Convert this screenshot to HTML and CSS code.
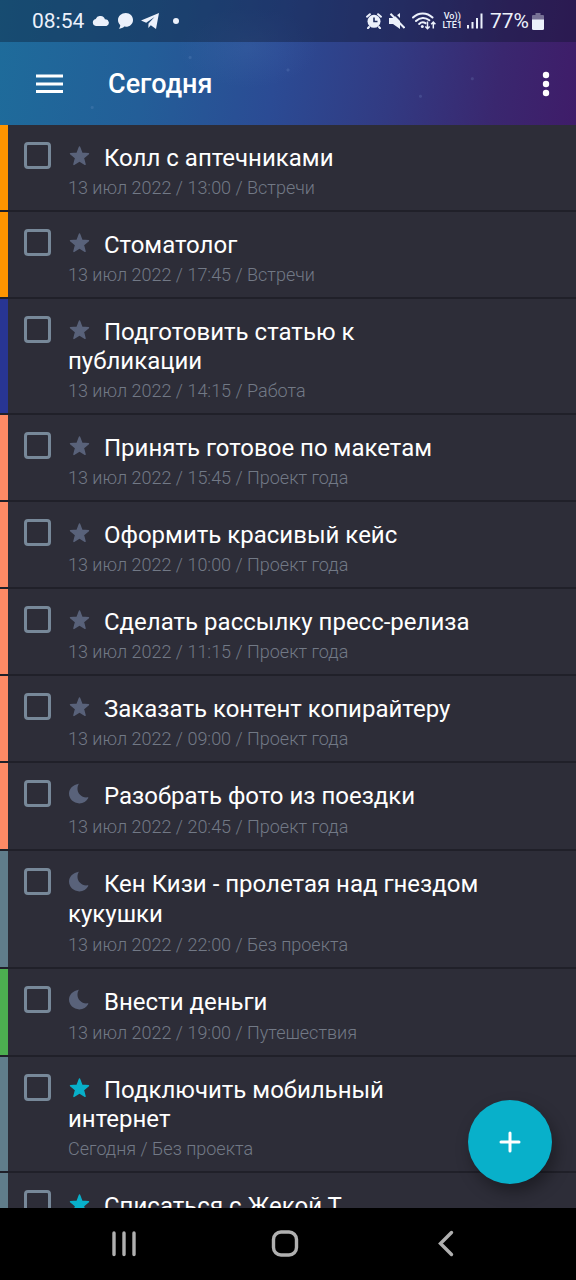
FILE: index.html
```html
<!DOCTYPE html>
<html lang="ru">
<head>
<meta charset="utf-8">
<meta name="viewport" content="width=device-width, initial-scale=1">
<title>Сегодня</title>
<link rel="stylesheet" href="styles.css">
</head>
<body>
<svg class="sprite" aria-hidden="true">
  <symbol id="star" viewBox="0 0 24 24"><path d="M11.500 3l2.400 6.200 6.600.4-5.100 4.300 1.700 6.500-5.600-3.600-5.600 3.600 1.700-6.500L2.500 9.600l6.600-.4z" fill="currentColor" stroke="currentColor" stroke-width="1.400" stroke-linejoin="round"/></symbol>
  <symbol id="moon" viewBox="0 0 24 24"><path d="M10.600 2.300C8.800 5.500 9.200 9.800 11.800 12.600c2.200 2.300 5 3.200 8 2.700.5-.1.700.3.500.7-1.800 3.400-5 5.400-9 5.400C5.600 21.400 1 17 1 11.600c0-4.900 3.900-8.800 9-9.700.6-.1.900 0 .6.400z" fill="currentColor"/></symbol>
</svg>
<header class="top">
  <div class="status">
    <div class="status-left">
      <span class="clock">08:54</span>
      <svg width="18" height="10" viewBox="0 0 18 10"><path d="M4 10a3.600 3.600 0 0 1-.3-7.100A5 5 0 0 1 13 3.400 3.400 3.400 0 0 1 14.500 10z" fill="currentColor"/></svg>
      <svg width="15" height="16" viewBox="0 0 15 16"><path d="M7.800 0C12 0 15 3 15 6.900s-3 6.800-7.200 6.800c-.6 0-1 0-1.500-.1C5 15 3 15.700.8 15.700c1-1 1.500-2.200 1.400-3.700C.8 10.700 0 8.900 0 6.900 0 3 3.500 0 7.800 0z" fill="currentColor"/></svg>
      <svg width="18" height="16" viewBox="0 0 18 16"><path d="M18 0L0 7.600l5.200 2.200L13.500 4 7.500 10.500l-.2 4.500 2.500-2.700L15 16z" fill="currentColor"/></svg>
      <span class="dot"></span>
    </div>
    <div class="status-right">
      <svg width="16" height="16" viewBox="0 0 16 16"><circle cx="8" cy="8.300" r="6.500" fill="currentColor"/><path d="M1 3.700L3.900 1.200M15 3.700L12.100 1.200M3 14l-1 1.200M13 14l1 1.200" stroke="currentColor" stroke-width="2" stroke-linecap="round"/><path d="M8 4.500v4h3.500" fill="none" stroke="#22305f" stroke-width="1.600"/></svg>
      <svg width="16" height="16" viewBox="0 0 16 16"><path d="M0 5h4l7-5v16l-7-5H0z" fill="currentColor"/><path d="M3 -1.500L17 12.500" stroke="#252c5c" stroke-width="2"/><path d="M1.500 .7L15.500 15" stroke="currentColor" stroke-width="2"/></svg>
      <svg width="24" height="18" viewBox="0 0 24 18"><g fill="none" stroke="currentColor" stroke-width="2" stroke-linecap="round"><path d="M1 5.500C6.500 0 15 0 20.500 5.500M4 9c4-4 9.500-4 13.300-.7M7.200 12c2-2 4.500-2 6.300-.8"/></g><circle cx="10.300" cy="14.400" r="1.500" fill="currentColor"/><path d="M15.500 9.500v7M13.300 14.500l2.200 2.200 2.200-2.200M21.300 16.500v-6M19.200 12.200l2.100-2.200 2.100 2.200" fill="none" stroke="currentColor" stroke-width="1.500"/></svg>
      <span class="volte"><span>Vo))</span><span>LTE1</span></span>
      <svg width="16" height="16" viewBox="0 0 16 16"><path d="M0 12h2v3.500H0zM4.500 9h2v6.500h-2zM9 5h2v10.500H9zM13.500.5h2v15h-2z" fill="currentColor"/></svg>
      <span class="percent">77%</span>
      <svg width="12" height="17" viewBox="0 0 12 17"><path d="M3.500 0h5v2H11a1 1 0 0 1 1 1v4H0V3a1 1 0 0 1 1-1h2.500z" fill="currentColor" opacity=".4"/><path d="M0 6.500h12V15.500a1.500 1.500 0 0 1-1.500 1.500h-9A1.500 1.500 0 0 1 0 15.500z" fill="currentColor"/></svg>
    </div>
  </div>
  <div class="appbar">
    <button class="icon-button" type="button" aria-label="Меню"><svg width="28" height="20" viewBox="0 0 28 20"><path d="M1 2h27M1 10h27M1 17.500h27" stroke="currentColor" stroke-width="3"/></svg></button>
    <h1 class="title">Сегодня</h1>
    <button class="icon-button" type="button" aria-label="Ещё"><svg width="8" height="26" viewBox="0 0 8 26"><g fill="currentColor"><circle cx="4" cy="4" r="3.200"/><circle cx="4" cy="13" r="3.200"/><circle cx="4" cy="22" r="3.200"/></g></svg></button>
  </div>
</header>
<main class="main">
  <ul class="tasks">
    <li class="task orange"><input class="check" type="checkbox" id="t1"><div class="body"><label class="name" for="t1"><svg class="mark"><use href="#star"/></svg>Колл с аптечниками</label><p class="meta">13 июл 2022 / 13:00 / Встречи</p></div></li>
    <li class="task orange"><input class="check" type="checkbox" id="t2"><div class="body"><label class="name" for="t2"><svg class="mark"><use href="#star"/></svg>Стоматолог</label><p class="meta">13 июл 2022 / 17:45 / Встречи</p></div></li>
    <li class="task indigo"><input class="check" type="checkbox" id="t3"><div class="body"><label class="name" for="t3"><svg class="mark"><use href="#star"/></svg>Подготовить статью к публикации</label><p class="meta">13 июл 2022 / 14:15 / Работа</p></div></li>
    <li class="task coral"><input class="check" type="checkbox" id="t4"><div class="body"><label class="name" for="t4"><svg class="mark"><use href="#star"/></svg>Принять готовое по макетам</label><p class="meta">13 июл 2022 / 15:45 / Проект года</p></div></li>
    <li class="task coral"><input class="check" type="checkbox" id="t5"><div class="body"><label class="name" for="t5"><svg class="mark"><use href="#star"/></svg>Оформить красивый кейс</label><p class="meta">13 июл 2022 / 10:00 / Проект года</p></div></li>
    <li class="task coral"><input class="check" type="checkbox" id="t6"><div class="body"><label class="name" for="t6"><svg class="mark"><use href="#star"/></svg>Сделать рассылку пресс-релиза</label><p class="meta">13 июл 2022 / 11:15 / Проект года</p></div></li>
    <li class="task coral"><input class="check" type="checkbox" id="t7"><div class="body"><label class="name" for="t7"><svg class="mark"><use href="#star"/></svg>Заказать контент копирайтеру</label><p class="meta">13 июл 2022 / 09:00 / Проект года</p></div></li>
    <li class="task coral evening"><input class="check" type="checkbox" id="t8"><div class="body"><label class="name" for="t8"><svg class="mark"><use href="#moon"/></svg>Разобрать фото из поездки</label><p class="meta">13 июл 2022 / 20:45 / Проект года</p></div></li>
    <li class="task slate evening"><input class="check" type="checkbox" id="t9"><div class="body"><label class="name" for="t9"><svg class="mark"><use href="#moon"/></svg>Кен Кизи - пролетая над гнездом кукушки</label><p class="meta">13 июл 2022 / 22:00 / Без проекта</p></div></li>
    <li class="task green evening"><input class="check" type="checkbox" id="t10"><div class="body"><label class="name" for="t10"><svg class="mark"><use href="#moon"/></svg>Внести деньги</label><p class="meta">13 июл 2022 / 19:00 / Путешествия</p></div></li>
    <li class="task slate today"><input class="check" type="checkbox" id="t11"><div class="body"><label class="name" for="t11"><svg class="mark"><use href="#star"/></svg>Подключить мобильный интернет</label><p class="meta">Сегодня / Без проекта</p></div></li>
    <li class="task slate today"><input class="check" type="checkbox" id="t12"><div class="body"><label class="name" for="t12"><svg class="mark"><use href="#star"/></svg>Списаться с Жекой Т</label></div></li>
  </ul>
  <button class="fab" type="button" aria-label="Добавить задачу"><svg width="22" height="22" viewBox="0 0 22 22"><path d="M11 2v18M2 11h18" stroke="currentColor" stroke-width="3" stroke-linecap="round"/></svg></button>
</main>
<nav class="nav">
  <button class="nav-button" type="button" aria-label="Недавние"><svg width="26" height="28" viewBox="0 0 26 28"><path d="M3 3v21.500M13 3v21.500M23 3v21.500" stroke="currentColor" stroke-width="3.400" stroke-linecap="round"/></svg></button>
  <button class="nav-button" type="button" aria-label="Домой"><svg width="28" height="28" viewBox="0 0 28 28"><rect x="2.500" y="2" width="23" height="23" rx="7.500" fill="none" stroke="currentColor" stroke-width="3.400"/></svg></button>
  <button class="nav-button" type="button" aria-label="Назад"><svg width="28" height="28" viewBox="0 0 28 28"><path d="M19.500 2.500L8.500 13.500l11 11" fill="none" stroke="currentColor" stroke-width="3.400" stroke-linecap="round"/></svg></button>
</nav>
</body>
</html>
```
FILE: styles.css
```css
* { box-sizing: border-box; }

body {
  margin: 0;
  height: 100vh;
  display: flex;
  flex-direction: column;
  background: #2d2d38;
  color: #fff;
  font-family: Roboto, "Noto Sans", sans-serif;
}

svg { display: block; flex: none; }
.sprite { position: absolute; width: 0; height: 0; }

button {
  padding: 0;
  border: 0;
  background: none;
  color: inherit;
  font: inherit;
  display: flex;
  align-items: center;
  justify-content: center;
}

.top {
  flex: none;
  background:
    radial-gradient(circle at 33% 46%, #7f9ed033 0 1px, transparent 2px),
    radial-gradient(circle at 50% 56%, #7f9ed033 0 1px, transparent 2px),
    radial-gradient(circle at 16% 86%, #7f9ed033 0 1px, transparent 2px),
    radial-gradient(circle at 73% 77%, #7f9ed033 0 1px, transparent 2px),
    radial-gradient(circle at 82% 63%, #7f9ed033 0 1px, transparent 2px),
    radial-gradient(ellipse 70px 40px at 43% 38%, #5a82c026, transparent),
    linear-gradient(98deg, #1e6c9b 0%, #235e98 26%, #2b4b94 48%, #323a82 68%, #3a276f 86%, #3f1c69 100%);
}

.status {
  height: 42px;
  padding: 0 32px;
  display: flex;
  align-items: center;
  justify-content: space-between;
  background: rgba(12, 20, 40, .36);
  color: #ecf1fb;
}
.status-left, .status-right { display: flex; align-items: center; }
.status-left { gap: 8px; }
.status-right { gap: 7px; }
.clock, .percent { font-size: 21px; line-height: 24px; }
.percent { margin-right: -4px; }
.dot { width: 6px; height: 6px; margin-left: 6px; border-radius: 50%; background: currentColor; }
.volte {
  display: flex;
  flex-direction: column;
  align-items: center;
  margin-right: -2px;
  font-size: 9px;
  line-height: 9px;
  font-weight: 500;
}

.appbar {
  height: 83px;
  padding: 0 26px 0 35px;
  display: flex;
  align-items: center;
}
.title { flex: 1; margin: 0 0 0 45px; font-size: 27px; line-height: 32px; font-weight: 500; }

.main { flex: 1; min-height: 0; position: relative; overflow: hidden; }
.tasks { margin: 0; padding: 0; list-style: none; }

.task {
  --mark: #59627a;
  display: flex;
  align-items: flex-start;
  gap: 17px;
  padding: 0 88px 10px 24px;
  border-bottom: 2px solid #202029;
  background: linear-gradient(var(--stripe), var(--stripe)) 0 0 / 8px 100% no-repeat padding-box;
}
.orange { --stripe: #ff9500; }
.indigo { --stripe: #283593; }
.coral { --stripe: #ff8a65; }
.slate { --stripe: #607d8b; }
.green { --stripe: #4caf50; }
.today { --mark: #08b0ca; }

.check {
  appearance: none;
  flex: none;
  width: 27px;
  height: 27px;
  margin: 17px 0 0;
  border: 3px solid #778899;
  border-radius: 4px;
}
.body { flex: 1; min-width: 0; padding-top: 19px; }
.name { display: block; font-size: 24px; line-height: 29px; }
.mark {
  display: inline-block;
  width: 24px;
  height: 24px;
  margin: -4px 12px 0 0;
  vertical-align: -2px;
  color: var(--mark);
}
.meta { margin: 3px 0 0; font-size: 18px; line-height: 24px; font-weight: 300; color: #727986; }

.evening .body { padding-top: 18px; }
.evening .name { line-height: 30px; }
.evening .meta { margin-top: 4px; }

.fab {
  position: absolute;
  right: 24px;
  bottom: 24px;
  width: 84px;
  height: 84px;
  border-radius: 50%;
  background: #08b0ca;
  box-shadow: 4px 8px 16px rgba(0, 0, 0, .35);
}

.nav {
  flex: none;
  height: 72px;
  padding: 0 49px 0 43px;
  display: flex;
  background: #000;
  color: #b0b0b0;
}
.nav-button { flex: 1; }
```
